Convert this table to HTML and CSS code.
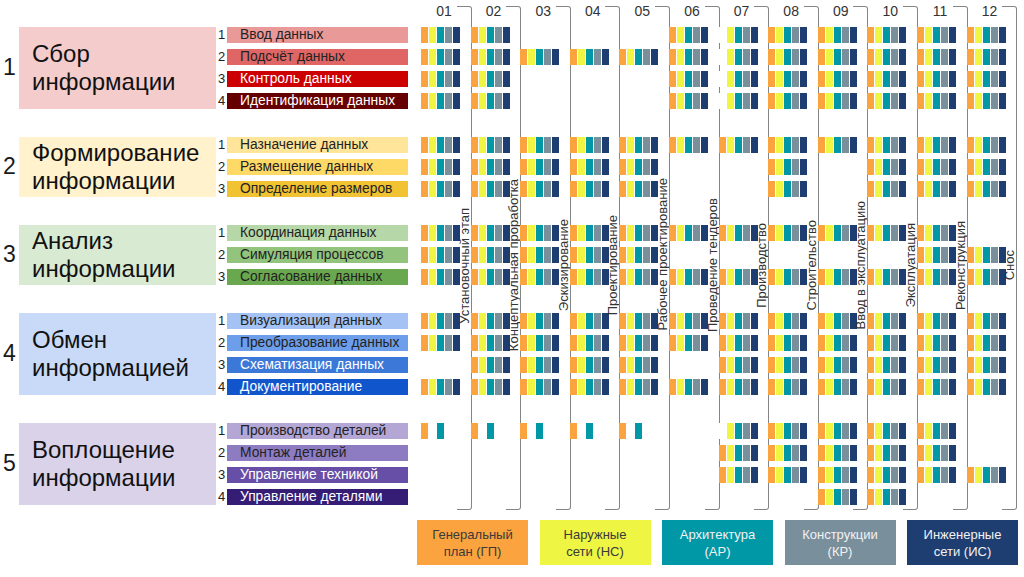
FILE: index.html
```html
<!DOCTYPE html>
<html lang="ru">
<head>
<meta charset="utf-8">
<title>Информационная матрица</title>
<link rel="stylesheet" href="styles.css">
</head>
<body>
<div class="page">
  <div class="left">
    <div class="group g1">
      <div class="gnum">1</div>
      <div class="gbox">Сбор<br>информации</div>
      <div class="items">
        <div class="item"><span class="inum">1</span><span class="bar b11">Ввод данных</span></div>
        <div class="item"><span class="inum">2</span><span class="bar b12">Подсчёт данных</span></div>
        <div class="item"><span class="inum">3</span><span class="bar b13 light">Контроль данных</span></div>
        <div class="item"><span class="inum">4</span><span class="bar b14 light">Идентификация данных</span></div>
      </div>
    </div>
    <div class="group g2">
      <div class="gnum">2</div>
      <div class="gbox">Формирование<br>информации</div>
      <div class="items">
        <div class="item"><span class="inum">1</span><span class="bar b21">Назначение данных</span></div>
        <div class="item"><span class="inum">2</span><span class="bar b22">Размещение данных</span></div>
        <div class="item"><span class="inum">3</span><span class="bar b23">Определение размеров</span></div>
      </div>
    </div>
    <div class="group g3">
      <div class="gnum">3</div>
      <div class="gbox">Анализ<br>информации</div>
      <div class="items">
        <div class="item"><span class="inum">1</span><span class="bar b31">Координация данных</span></div>
        <div class="item"><span class="inum">2</span><span class="bar b32">Симуляция процессов</span></div>
        <div class="item"><span class="inum">3</span><span class="bar b33">Согласование данных</span></div>
      </div>
    </div>
    <div class="group g4">
      <div class="gnum">4</div>
      <div class="gbox">Обмен<br>информацией</div>
      <div class="items">
        <div class="item"><span class="inum">1</span><span class="bar b41">Визуализация данных</span></div>
        <div class="item"><span class="inum">2</span><span class="bar b42">Преобразование данных</span></div>
        <div class="item"><span class="inum">3</span><span class="bar b43 light">Схематизация данных</span></div>
        <div class="item"><span class="inum">4</span><span class="bar b44 light">Документирование</span></div>
      </div>
    </div>
    <div class="group g5">
      <div class="gnum">5</div>
      <div class="gbox">Воплощение<br>информации</div>
      <div class="items">
        <div class="item"><span class="inum">1</span><span class="bar b51">Производство деталей</span></div>
        <div class="item"><span class="inum">2</span><span class="bar b52">Монтаж деталей</span></div>
        <div class="item"><span class="inum">3</span><span class="bar b53 light">Управление техникой</span></div>
        <div class="item"><span class="inum">4</span><span class="bar b54 light">Управление деталями</span></div>
      </div>
    </div>
  </div>

  <div class="right">
    <div class="chart">
      <!-- 01 -->
      <div class="col">
        <div class="col-head">01</div>
        <div class="col-body">
          <div class="cells">
            <div class="cg"><div class="cr f"></div><div class="cr f"></div><div class="cr f"></div><div class="cr f"></div></div>
            <div class="cg"><div class="cr f"></div><div class="cr f"></div><div class="cr f"></div></div>
            <div class="cg"><div class="cr f"></div><div class="cr f"></div><div class="cr f"></div></div>
            <div class="cg"><div class="cr f"></div><div class="cr f"></div><div class="cr"></div><div class="cr f"></div></div>
            <div class="cg"><div class="cr t"></div><div class="cr"></div><div class="cr"></div><div class="cr"></div></div>
          </div>
          <div class="col-label"><span>Установочный этап</span></div>
        </div>
      </div>
      <!-- 02 -->
      <div class="col">
        <div class="col-head">02</div>
        <div class="col-body">
          <div class="cells">
            <div class="cg"><div class="cr f"></div><div class="cr f"></div><div class="cr f"></div><div class="cr f"></div></div>
            <div class="cg"><div class="cr f"></div><div class="cr f"></div><div class="cr f"></div></div>
            <div class="cg"><div class="cr f"></div><div class="cr f"></div><div class="cr f"></div></div>
            <div class="cg"><div class="cr f"></div><div class="cr f"></div><div class="cr f"></div><div class="cr f"></div></div>
            <div class="cg"><div class="cr t"></div><div class="cr"></div><div class="cr"></div><div class="cr"></div></div>
          </div>
          <div class="col-label"><span>Концептуальная проработка</span></div>
        </div>
      </div>
      <!-- 03 -->
      <div class="col">
        <div class="col-head">03</div>
        <div class="col-body">
          <div class="cells">
            <div class="cg"><div class="cr"></div><div class="cr f"></div><div class="cr"></div><div class="cr"></div></div>
            <div class="cg"><div class="cr f"></div><div class="cr f"></div><div class="cr f"></div></div>
            <div class="cg"><div class="cr f"></div><div class="cr f"></div><div class="cr f"></div></div>
            <div class="cg"><div class="cr f"></div><div class="cr f"></div><div class="cr f"></div><div class="cr f"></div></div>
            <div class="cg"><div class="cr t"></div><div class="cr"></div><div class="cr"></div><div class="cr"></div></div>
          </div>
          <div class="col-label"><span>Эскизирование</span></div>
        </div>
      </div>
      <!-- 04 -->
      <div class="col">
        <div class="col-head">04</div>
        <div class="col-body">
          <div class="cells">
            <div class="cg"><div class="cr"></div><div class="cr f"></div><div class="cr"></div><div class="cr"></div></div>
            <div class="cg"><div class="cr f"></div><div class="cr f"></div><div class="cr f"></div></div>
            <div class="cg"><div class="cr f"></div><div class="cr f"></div><div class="cr f"></div></div>
            <div class="cg"><div class="cr f"></div><div class="cr f"></div><div class="cr f"></div><div class="cr f"></div></div>
            <div class="cg"><div class="cr t"></div><div class="cr"></div><div class="cr"></div><div class="cr"></div></div>
          </div>
          <div class="col-label"><span>Проектирование</span></div>
        </div>
      </div>
      <!-- 05 -->
      <div class="col">
        <div class="col-head">05</div>
        <div class="col-body">
          <div class="cells">
            <div class="cg"><div class="cr"></div><div class="cr f"></div><div class="cr"></div><div class="cr"></div></div>
            <div class="cg"><div class="cr f"></div><div class="cr f"></div><div class="cr f"></div></div>
            <div class="cg"><div class="cr f"></div><div class="cr f"></div><div class="cr f"></div></div>
            <div class="cg"><div class="cr f"></div><div class="cr f"></div><div class="cr f"></div><div class="cr f"></div></div>
            <div class="cg"><div class="cr t"></div><div class="cr"></div><div class="cr"></div><div class="cr"></div></div>
          </div>
          <div class="col-label up"><span>Рабочее проектирование</span></div>
        </div>
      </div>
      <!-- 06 -->
      <div class="col">
        <div class="col-head">06</div>
        <div class="col-body">
          <div class="cells">
            <div class="cg"><div class="cr f"></div><div class="cr f"></div><div class="cr f"></div><div class="cr f"></div></div>
            <div class="cg"><div class="cr f"></div><div class="cr"></div><div class="cr"></div></div>
            <div class="cg"><div class="cr f"></div><div class="cr"></div><div class="cr f"></div></div>
            <div class="cg"><div class="cr f"></div><div class="cr f"></div><div class="cr"></div><div class="cr f"></div></div>
            <div class="cg"><div class="cr"></div><div class="cr"></div><div class="cr"></div><div class="cr"></div></div>
          </div>
          <div class="col-label"><span>Проведение тендеров</span></div>
        </div>
      </div>
      <!-- 07 -->
      <div class="col">
        <div class="col-head">07</div>
        <div class="col-body">
          <div class="cells">
            <div class="cg"><div class="cr y"></div><div class="cr y"></div><div class="cr y"></div><div class="cr y"></div></div>
            <div class="cg"><div class="cr f"></div><div class="cr"></div><div class="cr"></div></div>
            <div class="cg"><div class="cr f"></div><div class="cr"></div><div class="cr f"></div></div>
            <div class="cg"><div class="cr f"></div><div class="cr f"></div><div class="cr f"></div><div class="cr f"></div></div>
            <div class="cg"><div class="cr y"></div><div class="cr f"></div><div class="cr f"></div><div class="cr"></div></div>
          </div>
          <div class="col-label"><span>Производство</span></div>
        </div>
      </div>
      <!-- 08 -->
      <div class="col">
        <div class="col-head">08</div>
        <div class="col-body">
          <div class="cells">
            <div class="cg"><div class="cr f"></div><div class="cr f"></div><div class="cr f"></div><div class="cr f"></div></div>
            <div class="cg"><div class="cr f"></div><div class="cr f"></div><div class="cr f"></div></div>
            <div class="cg"><div class="cr f"></div><div class="cr"></div><div class="cr f"></div></div>
            <div class="cg"><div class="cr f"></div><div class="cr f"></div><div class="cr f"></div><div class="cr f"></div></div>
            <div class="cg"><div class="cr f"></div><div class="cr f"></div><div class="cr f"></div><div class="cr"></div></div>
          </div>
          <div class="col-label"><span>Строительство</span></div>
        </div>
      </div>
      <!-- 09 -->
      <div class="col">
        <div class="col-head">09</div>
        <div class="col-body">
          <div class="cells">
            <div class="cg"><div class="cr f"></div><div class="cr f"></div><div class="cr f"></div><div class="cr f"></div></div>
            <div class="cg"><div class="cr f"></div><div class="cr"></div><div class="cr"></div></div>
            <div class="cg"><div class="cr f"></div><div class="cr"></div><div class="cr f"></div></div>
            <div class="cg"><div class="cr f"></div><div class="cr f"></div><div class="cr f"></div><div class="cr f"></div></div>
            <div class="cg"><div class="cr f"></div><div class="cr f"></div><div class="cr f"></div><div class="cr f"></div></div>
          </div>
          <div class="col-label"><span>Ввод в эксплуатацию</span></div>
        </div>
      </div>
      <!-- 10 -->
      <div class="col">
        <div class="col-head">10</div>
        <div class="col-body">
          <div class="cells">
            <div class="cg"><div class="cr f"></div><div class="cr f"></div><div class="cr f"></div><div class="cr f"></div></div>
            <div class="cg"><div class="cr f"></div><div class="cr f"></div><div class="cr f"></div></div>
            <div class="cg"><div class="cr f"></div><div class="cr"></div><div class="cr f"></div></div>
            <div class="cg"><div class="cr f"></div><div class="cr f"></div><div class="cr f"></div><div class="cr f"></div></div>
            <div class="cg"><div class="cr f"></div><div class="cr f"></div><div class="cr f"></div><div class="cr f"></div></div>
          </div>
          <div class="col-label"><span>Эксплуатация</span></div>
        </div>
      </div>
      <!-- 11 -->
      <div class="col">
        <div class="col-head">11</div>
        <div class="col-body">
          <div class="cells">
            <div class="cg"><div class="cr f"></div><div class="cr f"></div><div class="cr f"></div><div class="cr f"></div></div>
            <div class="cg"><div class="cr f"></div><div class="cr f"></div><div class="cr f"></div></div>
            <div class="cg"><div class="cr f"></div><div class="cr f"></div><div class="cr f"></div></div>
            <div class="cg"><div class="cr f"></div><div class="cr f"></div><div class="cr f"></div><div class="cr f"></div></div>
            <div class="cg"><div class="cr f"></div><div class="cr f"></div><div class="cr f"></div><div class="cr"></div></div>
          </div>
          <div class="col-label"><span>Реконструкция</span></div>
        </div>
      </div>
      <!-- 12 -->
      <div class="col">
        <div class="col-head">12</div>
        <div class="col-body">
          <div class="cells">
            <div class="cg"><div class="cr f"></div><div class="cr f"></div><div class="cr f"></div><div class="cr f"></div></div>
            <div class="cg"><div class="cr f"></div><div class="cr f"></div><div class="cr f"></div></div>
            <div class="cg"><div class="cr"></div><div class="cr f"></div><div class="cr f"></div></div>
            <div class="cg"><div class="cr f"></div><div class="cr f"></div><div class="cr f"></div><div class="cr f"></div></div>
            <div class="cg"><div class="cr"></div><div class="cr"></div><div class="cr f"></div><div class="cr"></div></div>
          </div>
          <div class="col-label"><span>Снос</span></div>
        </div>
      </div>
    </div>

    <div class="legend">
      <div class="lg lg-gp">Генеральный<br>план (ГП)</div>
      <div class="lg lg-ns">Наружные<br>сети (НС)</div>
      <div class="lg lg-ar">Архитектура<br>(АР)</div>
      <div class="lg lg-kr">Конструкции<br>(КР)</div>
      <div class="lg lg-is">Инженерные<br>сети (ИС)</div>
    </div>
  </div>
</div>
</body>
</html>
```

FILE: styles.css
```css
:root {
  --o: #fba43f;
  --yl: #eef543;
  --t: #0097a7;
  --g: #7a8f9c;
  --n: #1e3d71;
}

* { box-sizing: border-box; }

html, body {
  margin: 0;
  padding: 0;
  background: #fff;
}

body {
  width: 1024px;
  height: 577px;
  overflow: hidden;
  font-family: "Liberation Sans", Arial, sans-serif;
  color: #222;
}

.page {
  display: flex;
  gap: 9px;
}

/* ---------- left side ---------- */
.left {
  width: 408px;
  padding-top: 26.5px;
  display: flex;
  flex-direction: column;
  gap: 28px;
}

.group { display: flex; }

.gnum {
  width: 19px;
  display: flex;
  align-items: center;
  justify-content: center;
  font-size: 23px;
  color: #1a1a1a;
}

.gbox {
  width: 197px;
  padding-left: 13px;
  display: flex;
  align-items: center;
  font-size: 24px;
  line-height: 28px;
  color: #111;
}

.g1 .gbox { background: #f4cccc; }
.g2 .gbox { background: #fff2cc; }
.g3 .gbox { background: #d9ead3; }
.g4 .gbox { background: #c9daf8; }
.g5 .gbox { background: #d9d2e9; }

.items {
  display: flex;
  flex-direction: column;
  gap: 6px;
}

.item {
  display: flex;
  height: 16px;
}

.inum {
  width: 11px;
  font-size: 13px;
  line-height: 16px;
  text-align: center;
  color: #222;
}

.bar {
  width: 181px;
  padding-left: 13px;
  font-size: 13.8px;
  line-height: 16px;
  white-space: nowrap;
  color: #222;
}
.bar.light { color: #fff; }

.b11 { background: #ea9999; }
.b12 { background: #e06666; }
.b13 { background: #cc0000; }
.b14 { background: #660000; }
.b21 { background: #ffe599; }
.b22 { background: #ffd966; }
.b23 { background: #f1c232; }
.b31 { background: #b6d7a8; }
.b32 { background: #93c47d; }
.b33 { background: #6aa84f; }
.b41 { background: #a4c2f4; }
.b42 { background: #6d9eeb; }
.b43 { background: #3c78d8; }
.b44 { background: #1155cc; }
.b51 { background: #b4a7d6; }
.b52 { background: #8e7cc3; }
.b53 { background: #674ea7; }
.b54 { background: #351c75; }

/* ---------- chart ---------- */
.right {
  display: flex;
  flex-direction: column;
}

.chart {
  display: flex;
  margin-left: 4px;
}

.col {
  position: relative;
  width: 49.6px;
}

.col::after {
  content: "";
  position: absolute;
  top: 6px;
  right: -1px;
  width: 14px;
  height: 502px;
  border: 1.5px solid #858585;
  border-left: 0;
  border-radius: 0 3px 3px 0;
}

.col-head {
  width: 46px;
  height: 26.5px;
  padding-top: 3px;
  text-align: center;
  font-size: 14px;
  line-height: 16px;
  color: #333;
}

.col-body { display: flex; }

.cells {
  width: 39px;
  flex: none;
  display: flex;
  flex-direction: column;
  gap: 28px;
}

.cg {
  display: flex;
  flex-direction: column;
  gap: 6px;
}

.cr { height: 16px; }

.cr.f {
  background: linear-gradient(90deg,
    var(--o) 0 7px, #fff 7px 8px,
    var(--yl) 8px 15px, #fff 15px 16px,
    var(--t) 16px 23px, #fff 23px 24px,
    var(--g) 24px 31px, #fff 31px 32px,
    var(--n) 32px 39px);
}

.cr.y {
  background: linear-gradient(90deg,
    #fff 0 8px,
    var(--yl) 8px 15px, #fff 15px 16px,
    var(--t) 16px 23px, #fff 23px 24px,
    var(--g) 24px 31px, #fff 31px 32px,
    var(--n) 32px 39px);
}

.cr.t {
  background: linear-gradient(90deg,
    var(--o) 0 7px, #fff 7px 16px,
    var(--t) 16px 23px, #fff 23px 39px);
}

.col-label {
  flex: 1;
  min-width: 0;
  display: flex;
  align-items: center;
  justify-content: flex-end;
}
.col-label.up { padding-bottom: 23px; }

.col-label span {
  writing-mode: vertical-rl;
  transform: rotate(180deg);
  font-size: 13px;
  line-height: 12px;
  white-space: nowrap;
  color: #333;
}

/* ---------- legend ---------- */
.legend {
  display: flex;
  gap: 11.5px;
  margin-top: 15.5px;
}

.lg {
  width: 111px;
  height: 45px;
  display: flex;
  align-items: center;
  justify-content: center;
  text-align: center;
  font-size: 13px;
  line-height: 17px;
}

.lg-gp { background: var(--o); color: #3a3a3a; }
.lg-ns { background: var(--yl); color: #3a3a3a; }
.lg-ar { background: var(--t); color: #f2f2f2; }
.lg-kr { background: var(--g); color: #f2f2f2; }
.lg-is { background: var(--n); color: #f2f2f2; }
```
